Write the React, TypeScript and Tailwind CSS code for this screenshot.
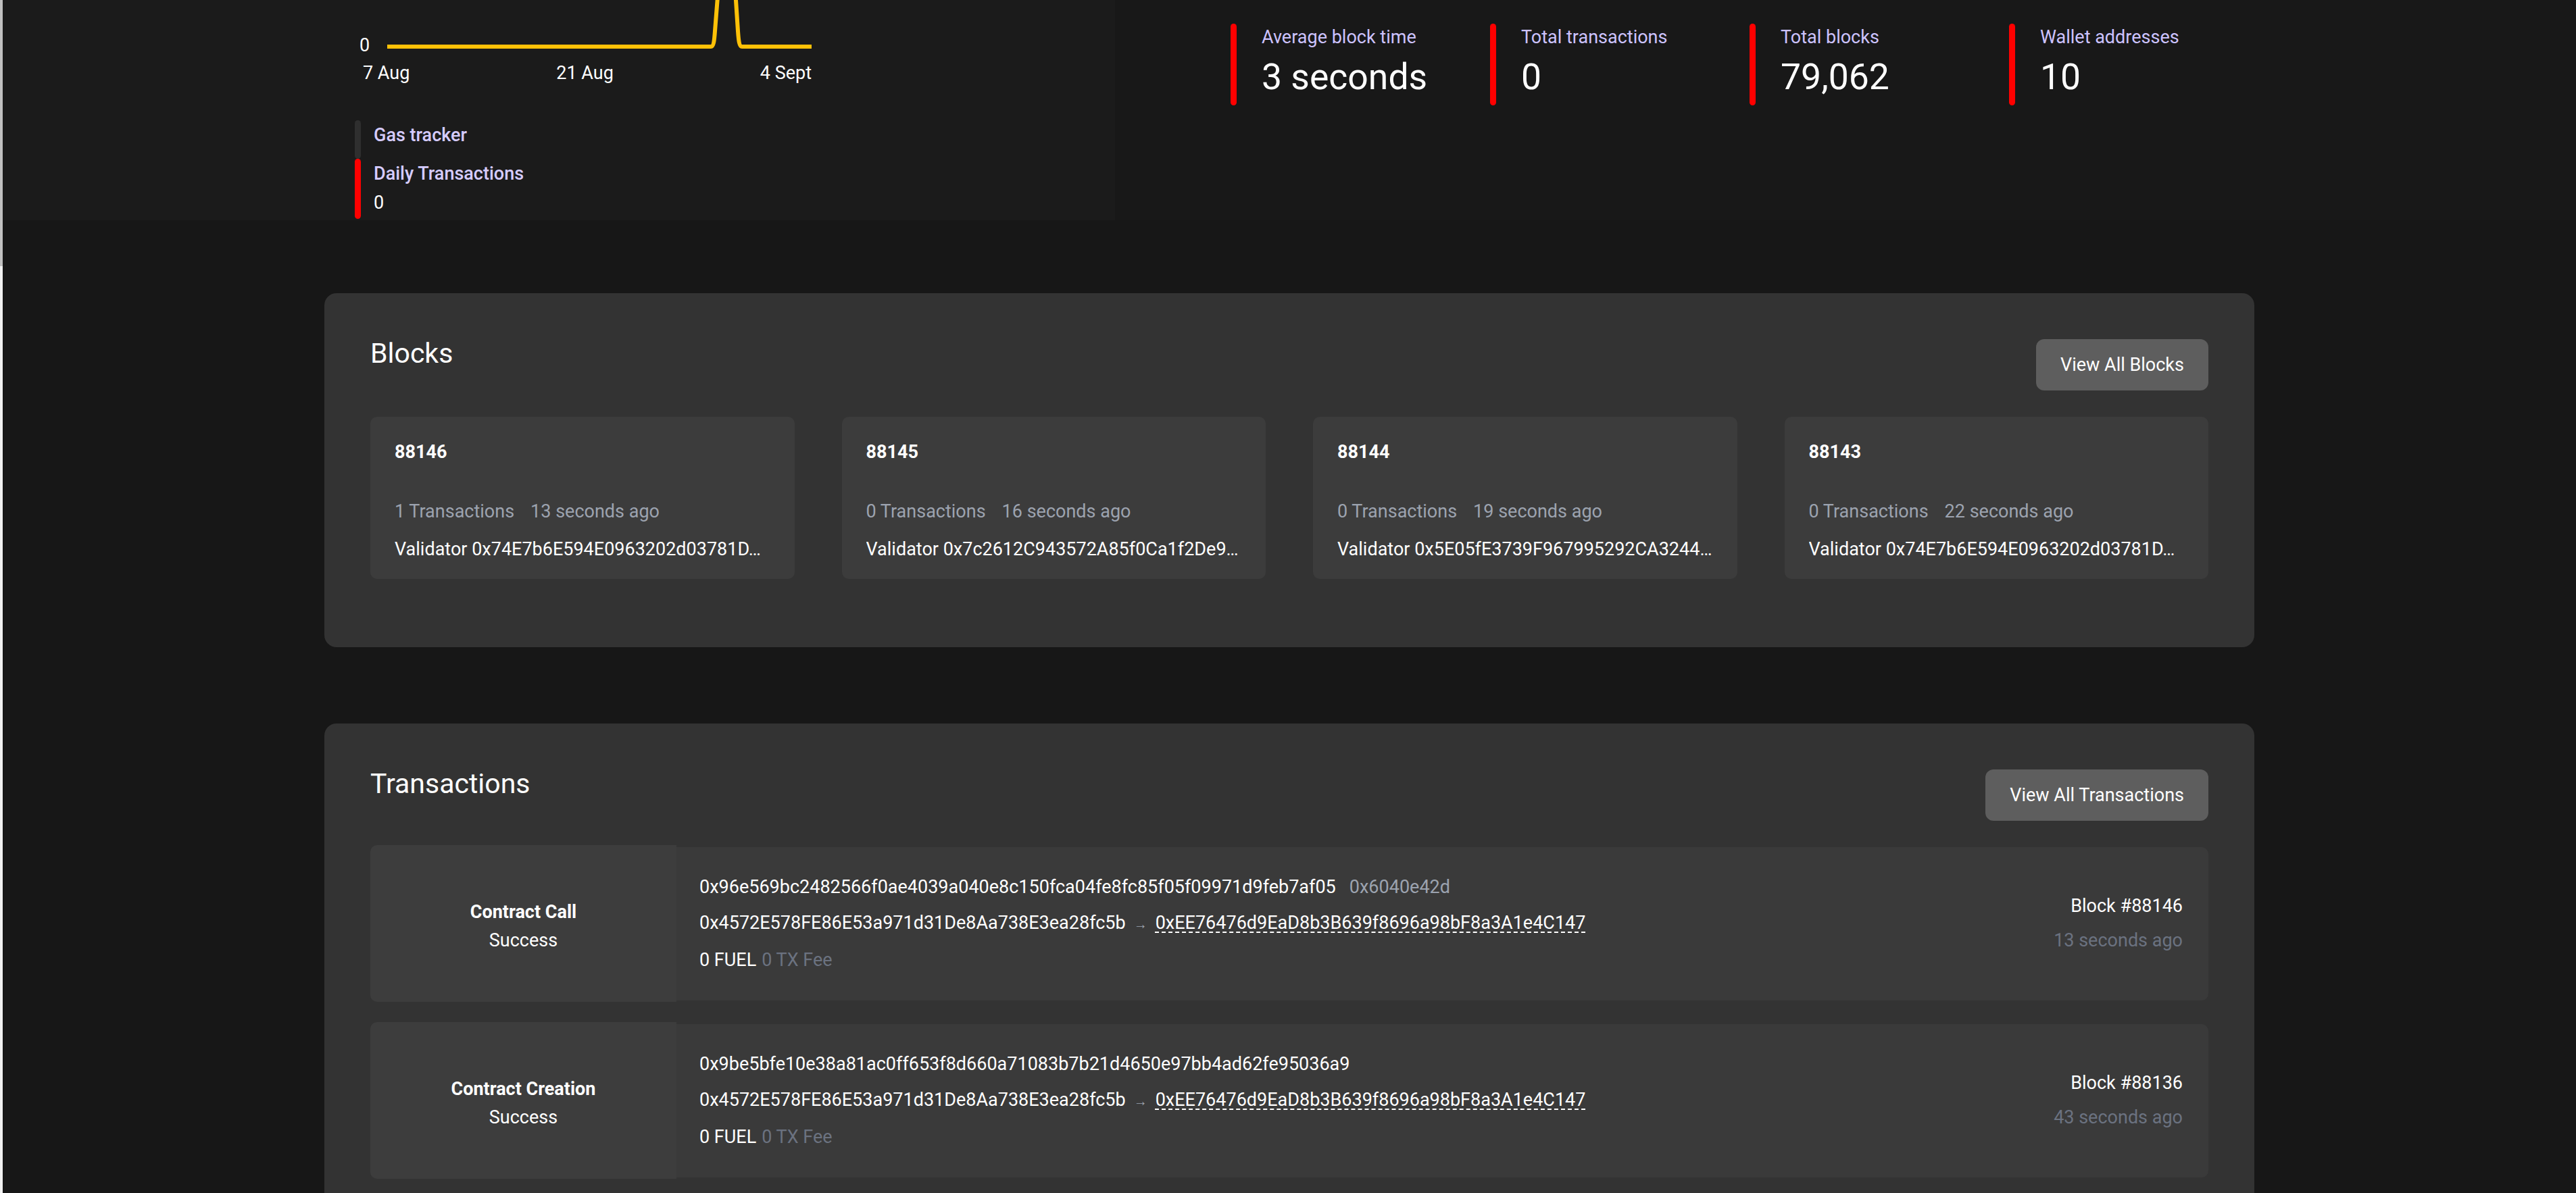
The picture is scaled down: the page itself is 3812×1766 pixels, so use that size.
import React from "react";

const stats = [
  { label: "Average block time", value: "3 seconds" },
  { label: "Total transactions", value: "0" },
  { label: "Total blocks", value: "79,062" },
  { label: "Wallet addresses", value: "10" },
];

const blocks = [
  { number: 88146, txs: 1, ago: "13 seconds ago", validator: "0x74E7b6E594E0963202d03781D…" },
  { number: 88145, txs: 0, ago: "16 seconds ago", validator: "0x7c2612C943572A85f0Ca1f2De9…" },
  { number: 88144, txs: 0, ago: "19 seconds ago", validator: "0x5E05fE3739F967995292CA3244…" },
  { number: 88143, txs: 0, ago: "22 seconds ago", validator: "0x74E7b6E594E0963202d03781D…" },
];

const transactions = [
  {
    type: "Contract Call",
    status: "Success",
    hash: "0x96e569bc2482566f0ae4039a040e8c150fca04fe8fc85f05f09971d9feb7af05",
    method: "0x6040e42d",
    from: "0x4572E578FE86E53a971d31De8Aa738E3ea28fc5b",
    to: "0xEE76476d9EaD8b3B639f8696a98bF8a3A1e4C147",
    block: "Block #88146",
    ago: "13 seconds ago",
  },
  {
    type: "Contract Creation",
    status: "Success",
    hash: "0x9be5bfe10e38a81ac0ff653f8d660a71083b7b21d4650e97bb4ad62fe95036a9",
    method: "",
    from: "0x4572E578FE86E53a971d31De8Aa738E3ea28fc5b",
    to: "0xEE76476d9EaD8b3B639f8696a98bF8a3A1e4C147",
    block: "Block #88136",
    ago: "43 seconds ago",
  },
];

function DailyChart() {
  return (
    <div>
      <div className="flex h-[88px]">
        <div className="w-[48px] pl-[7px] pt-[47px] text-[27px] leading-[40px]">0</div>
        <svg width="628" height="88" viewBox="0 0 628 88" className="shrink-0">
          <path
            d="M0 69 H479 C483 69 484 60 485 46 L491 -30 L514 -30 L519 46 C520 60 521 69 525 69 H628"
            fill="none"
            stroke="#ffc107"
            strokeWidth="6"
            strokeLinejoin="round"
          />
        </svg>
      </div>
      <div className="ml-[12px] flex w-[664px] justify-between text-[27px] leading-[40px]">
        <span>7 Aug</span>
        <span>21 Aug</span>
        <span>4 Sept</span>
      </div>
      {/* legend */}
      <div className="mt-[50px]">
        <div className="flex gap-[19px]">
          <div className="w-[9px] rounded-full bg-[#2f2f2f]" />
          <div className="pt-[1px] pb-[13px] text-[27px] font-medium leading-[43px] text-[#d6ccff]">
            Gas tracker
          </div>
        </div>
        <div className="flex gap-[19px]">
          <div className="w-[9px] rounded-full bg-[#ff0000]" />
          <div className="pt-[1px] pb-[2px] text-[27px] leading-[43px]">
            <div className="font-medium text-[#d6ccff]">Daily Transactions</div>
            <div className="text-white">0</div>
          </div>
        </div>
      </div>
    </div>
  );
}

function SectionHeader({ title, action }: { title: string; action: string }) {
  return (
    <div className="flex items-start justify-between">
      <h2 className="pt-[1px] text-[41px] leading-[61px]">{title}</h2>
      <button className="mt-[10px] h-[76px] rounded-[12px] bg-[#5e5e5e] px-[36px] text-[27px] text-white">
        {action}
      </button>
    </div>
  );
}

export default function App() {
  return (
    <div className="flex h-[1766px] w-full overflow-hidden bg-[#171717] font-[Roboto,sans-serif] text-white">
      {/* scrollbar strip */}
      <div className="flex w-[4px] shrink-0 flex-col">
        <div className="h-[394px] bg-[#c1c1c1]" />
        <div className="flex-1 bg-[#f1f1f1]" />
      </div>

      <main className="min-w-0 flex-1">
        {/* Top: chart + stats */}
        <div className="flex h-[326px] bg-[#181818]">
          <div className="w-[1646px] shrink-0 bg-[#1b1b1b] pl-[521px]">
            <DailyChart />
          </div>
          <div className="ml-[171px] flex pt-[35px]">
            {stats.map((s) => (
              <div key={s.label} className="flex w-[384px] gap-[37px]">
                <div className="h-[121px] w-[9px] rounded-full bg-[#ff0000]" />
                <div>
                  <div className="text-[27px] leading-[40px] text-[#cdc3ff]">{s.label}</div>
                  <div className="mt-[6px] text-[53.5px] leading-[66px]">{s.value}</div>
                </div>
              </div>
            ))}
          </div>
        </div>

        {/* Blocks */}
        <section className="mx-auto mt-[108px] w-3/4 rounded-[18px] bg-[#333333] px-[68px] pt-[58px] pb-[101px]">
          <SectionHeader title="Blocks" action="View All Blocks" />
          <div className="mt-[39px] grid grid-cols-4 gap-[70px]">
            {blocks.map((b, idx) => (
              <div key={idx} className="min-w-0 rounded-[10px] bg-[#3c3c3c] px-[36px] pt-[32px] pb-[24px]">
                <div className="text-[27px] font-bold leading-[40px]">{b.number}</div>
                <div className="mt-[48px] flex text-[27px] leading-[40px] text-[#9ca3af]">
                  <span>{b.txs} Transactions</span>
                  <span className="ml-[24px]">{b.ago}</span>
                </div>
                <div className="mt-[16px] truncate text-[27px] leading-[40px]">
                  Validator {b.validator}
                </div>
              </div>
            ))}
          </div>
        </section>

        {/* Transactions */}
        <section className="mx-auto mt-[113px] w-3/4 rounded-[18px] bg-[#333333] px-[68px] pt-[58px] pb-[60px]">
          <SectionHeader title="Transactions" action="View All Transactions" />
          <div className="mt-[36px] flex flex-col gap-[30px]">
            {transactions.map((t, idx) => (
              <div key={idx} className="flex items-center">
                <div className="flex h-[232px] w-[453px] shrink-0 flex-col items-center justify-center rounded-l-[10px] bg-[#3d3d3d] pt-[8px] text-[27px] leading-[42px]">
                  <div className="font-bold">{t.type}</div>
                  <div>{t.status}</div>
                </div>
                <div className="flex h-[227px] min-w-0 flex-1 items-center justify-between rounded-r-[10px] bg-[#3a3a3a] pl-[34px] pr-[38px] text-[27px] leading-[53px]">
                  <div className="min-w-0">
                    <div className="whitespace-nowrap">
                      <span>{t.hash}</span>
                      {t.method && <span className="ml-[20px] text-[#9ca3af]">{t.method}</span>}
                    </div>
                    <div className="flex items-baseline whitespace-nowrap">
                      <span>{t.from}</span>
                      <span className="mx-[12px] text-[20px] text-[#9ca3af]">→</span>
                      <span className="underline decoration-dashed decoration-[2px] underline-offset-[5px]">
                        {t.to}
                      </span>
                    </div>
                    <div className="whitespace-nowrap">
                      <span>0 FUEL</span>
                      <span className="ml-[8px] text-[#6b7280]">0 TX Fee</span>
                    </div>
                  </div>
                  <div className="text-right leading-[51px]">
                    <div>{t.block}</div>
                    <div className="text-[#6b7280]">{t.ago}</div>
                  </div>
                </div>
              </div>
            ))}
          </div>
        </section>
      </main>
    </div>
  );
}
